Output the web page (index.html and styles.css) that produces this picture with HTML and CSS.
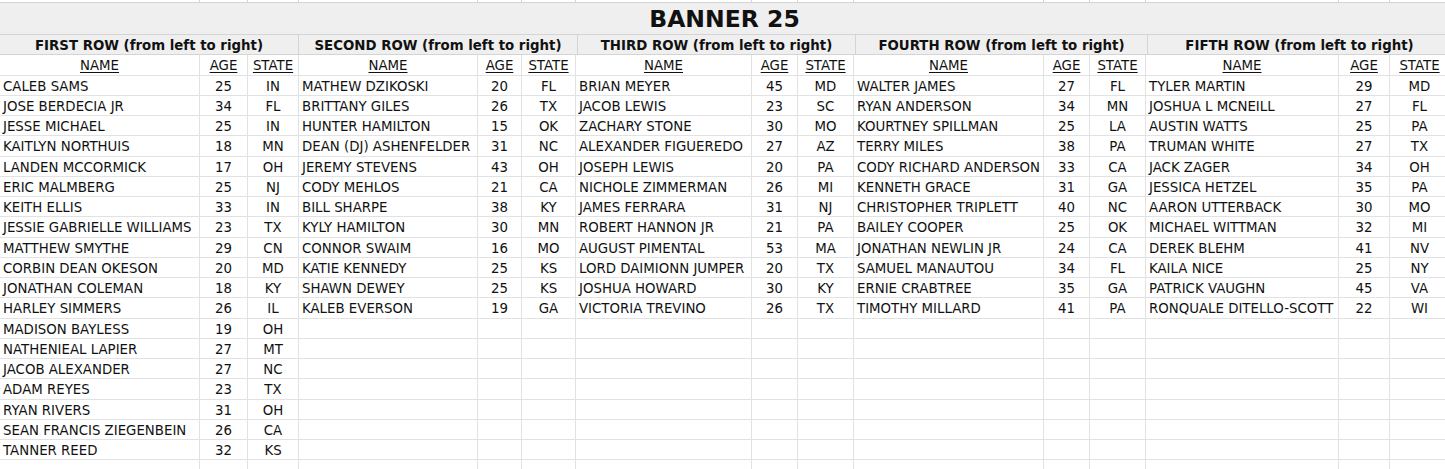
FILE: index.html
```html
<!DOCTYPE html>
<html>
<head>
<meta charset="utf-8">
<title>Banner 25</title>
<link rel="stylesheet" href="styles.css">
</head>
<body>
<div class="sheet">
  <div class="row top">
    <div></div><div></div><div></div><div></div><div></div><div></div><div></div><div></div><div></div><div></div><div></div><div></div><div></div><div></div><div></div>
  </div>
  <div class="row title"><div class="title-cell">BANNER 25</div></div>
  <div class="row head">
    <div class="group">FIRST ROW (from left to right)</div>
    <div class="group">SECOND ROW (from left to right)</div>
    <div class="group">THIRD ROW (from left to right)</div>
    <div class="group">FOURTH ROW (from left to right)</div>
    <div class="group">FIFTH ROW (from left to right)</div>
  </div>
  <div class="row sub">
    <div class="c"><u>NAME</u></div><div class="c"><u>AGE</u></div><div class="c"><u>STATE</u></div>
    <div class="c"><u>NAME</u></div><div class="c"><u>AGE</u></div><div class="c"><u>STATE</u></div>
    <div class="c"><u>NAME</u></div><div class="c"><u>AGE</u></div><div class="c"><u>STATE</u></div>
    <div class="c"><u>NAME</u></div><div class="c"><u>AGE</u></div><div class="c"><u>STATE</u></div>
    <div class="c"><u>NAME</u></div><div class="c"><u>AGE</u></div><div class="c"><u>STATE</u></div>
  </div>
  <div class="row">
    <div class="n">CALEB SAMS</div><div class="c">25</div><div class="c">IN</div>
    <div class="n">MATHEW DZIKOSKI</div><div class="c">20</div><div class="c">FL</div>
    <div class="n">BRIAN MEYER</div><div class="c">45</div><div class="c">MD</div>
    <div class="n">WALTER JAMES</div><div class="c">27</div><div class="c">FL</div>
    <div class="n">TYLER MARTIN</div><div class="c">29</div><div class="c">MD</div>
  </div>
  <div class="row">
    <div class="n">JOSE BERDECIA JR</div><div class="c">34</div><div class="c">FL</div>
    <div class="n">BRITTANY GILES</div><div class="c">26</div><div class="c">TX</div>
    <div class="n">JACOB LEWIS</div><div class="c">23</div><div class="c">SC</div>
    <div class="n">RYAN ANDERSON</div><div class="c">34</div><div class="c">MN</div>
    <div class="n">JOSHUA L MCNEILL</div><div class="c">27</div><div class="c">FL</div>
  </div>
  <div class="row">
    <div class="n">JESSE MICHAEL</div><div class="c">25</div><div class="c">IN</div>
    <div class="n">HUNTER HAMILTON</div><div class="c">15</div><div class="c">OK</div>
    <div class="n">ZACHARY STONE</div><div class="c">30</div><div class="c">MO</div>
    <div class="n">KOURTNEY SPILLMAN</div><div class="c">25</div><div class="c">LA</div>
    <div class="n">AUSTIN WATTS</div><div class="c">25</div><div class="c">PA</div>
  </div>
  <div class="row">
    <div class="n">KAITLYN NORTHUIS</div><div class="c">18</div><div class="c">MN</div>
    <div class="n">DEAN (DJ) ASHENFELDER</div><div class="c">31</div><div class="c">NC</div>
    <div class="n">ALEXANDER FIGUEREDO</div><div class="c">27</div><div class="c">AZ</div>
    <div class="n">TERRY MILES</div><div class="c">38</div><div class="c">PA</div>
    <div class="n">TRUMAN WHITE</div><div class="c">27</div><div class="c">TX</div>
  </div>
  <div class="row">
    <div class="n">LANDEN MCCORMICK</div><div class="c">17</div><div class="c">OH</div>
    <div class="n">JEREMY STEVENS</div><div class="c">43</div><div class="c">OH</div>
    <div class="n">JOSEPH LEWIS</div><div class="c">20</div><div class="c">PA</div>
    <div class="n">CODY RICHARD ANDERSON</div><div class="c">33</div><div class="c">CA</div>
    <div class="n">JACK ZAGER</div><div class="c">34</div><div class="c">OH</div>
  </div>
  <div class="row">
    <div class="n">ERIC MALMBERG</div><div class="c">25</div><div class="c">NJ</div>
    <div class="n">CODY MEHLOS</div><div class="c">21</div><div class="c">CA</div>
    <div class="n">NICHOLE ZIMMERMAN</div><div class="c">26</div><div class="c">MI</div>
    <div class="n">KENNETH GRACE</div><div class="c">31</div><div class="c">GA</div>
    <div class="n">JESSICA HETZEL</div><div class="c">35</div><div class="c">PA</div>
  </div>
  <div class="row">
    <div class="n">KEITH ELLIS</div><div class="c">33</div><div class="c">IN</div>
    <div class="n">BILL SHARPE</div><div class="c">38</div><div class="c">KY</div>
    <div class="n">JAMES FERRARA</div><div class="c">31</div><div class="c">NJ</div>
    <div class="n">CHRISTOPHER TRIPLETT</div><div class="c">40</div><div class="c">NC</div>
    <div class="n">AARON UTTERBACK</div><div class="c">30</div><div class="c">MO</div>
  </div>
  <div class="row">
    <div class="n">JESSIE GABRIELLE WILLIAMS</div><div class="c">23</div><div class="c">TX</div>
    <div class="n">KYLY HAMILTON</div><div class="c">30</div><div class="c">MN</div>
    <div class="n">ROBERT HANNON JR</div><div class="c">21</div><div class="c">PA</div>
    <div class="n">BAILEY COOPER</div><div class="c">25</div><div class="c">OK</div>
    <div class="n">MICHAEL WITTMAN</div><div class="c">32</div><div class="c">MI</div>
  </div>
  <div class="row">
    <div class="n">MATTHEW SMYTHE</div><div class="c">29</div><div class="c">CN</div>
    <div class="n">CONNOR SWAIM</div><div class="c">16</div><div class="c">MO</div>
    <div class="n">AUGUST PIMENTAL</div><div class="c">53</div><div class="c">MA</div>
    <div class="n">JONATHAN NEWLIN JR</div><div class="c">24</div><div class="c">CA</div>
    <div class="n">DEREK BLEHM</div><div class="c">41</div><div class="c">NV</div>
  </div>
  <div class="row">
    <div class="n">CORBIN DEAN OKESON</div><div class="c">20</div><div class="c">MD</div>
    <div class="n">KATIE KENNEDY</div><div class="c">25</div><div class="c">KS</div>
    <div class="n">LORD DAIMIONN JUMPER</div><div class="c">20</div><div class="c">TX</div>
    <div class="n">SAMUEL MANAUTOU</div><div class="c">34</div><div class="c">FL</div>
    <div class="n">KAILA NICE</div><div class="c">25</div><div class="c">NY</div>
  </div>
  <div class="row">
    <div class="n">JONATHAN COLEMAN</div><div class="c">18</div><div class="c">KY</div>
    <div class="n">SHAWN DEWEY</div><div class="c">25</div><div class="c">KS</div>
    <div class="n">JOSHUA HOWARD</div><div class="c">30</div><div class="c">KY</div>
    <div class="n">ERNIE CRABTREE</div><div class="c">35</div><div class="c">GA</div>
    <div class="n">PATRICK VAUGHN</div><div class="c">45</div><div class="c">VA</div>
  </div>
  <div class="row">
    <div class="n">HARLEY SIMMERS</div><div class="c">26</div><div class="c">IL</div>
    <div class="n">KALEB EVERSON</div><div class="c">19</div><div class="c">GA</div>
    <div class="n">VICTORIA TREVINO</div><div class="c">26</div><div class="c">TX</div>
    <div class="n">TIMOTHY MILLARD</div><div class="c">41</div><div class="c">PA</div>
    <div class="n">RONQUALE DITELLO-SCOTT</div><div class="c">22</div><div class="c">WI</div>
  </div>
  <div class="row">
    <div class="n">MADISON BAYLESS</div><div class="c">19</div><div class="c">OH</div>
    <div class="n"></div><div class="c"></div><div class="c"></div>
    <div class="n"></div><div class="c"></div><div class="c"></div>
    <div class="n"></div><div class="c"></div><div class="c"></div>
    <div class="n"></div><div class="c"></div><div class="c"></div>
  </div>
  <div class="row">
    <div class="n">NATHENIEAL LAPIER</div><div class="c">27</div><div class="c">MT</div>
    <div class="n"></div><div class="c"></div><div class="c"></div>
    <div class="n"></div><div class="c"></div><div class="c"></div>
    <div class="n"></div><div class="c"></div><div class="c"></div>
    <div class="n"></div><div class="c"></div><div class="c"></div>
  </div>
  <div class="row">
    <div class="n">JACOB ALEXANDER</div><div class="c">27</div><div class="c">NC</div>
    <div class="n"></div><div class="c"></div><div class="c"></div>
    <div class="n"></div><div class="c"></div><div class="c"></div>
    <div class="n"></div><div class="c"></div><div class="c"></div>
    <div class="n"></div><div class="c"></div><div class="c"></div>
  </div>
  <div class="row">
    <div class="n">ADAM REYES</div><div class="c">23</div><div class="c">TX</div>
    <div class="n"></div><div class="c"></div><div class="c"></div>
    <div class="n"></div><div class="c"></div><div class="c"></div>
    <div class="n"></div><div class="c"></div><div class="c"></div>
    <div class="n"></div><div class="c"></div><div class="c"></div>
  </div>
  <div class="row">
    <div class="n">RYAN RIVERS</div><div class="c">31</div><div class="c">OH</div>
    <div class="n"></div><div class="c"></div><div class="c"></div>
    <div class="n"></div><div class="c"></div><div class="c"></div>
    <div class="n"></div><div class="c"></div><div class="c"></div>
    <div class="n"></div><div class="c"></div><div class="c"></div>
  </div>
  <div class="row">
    <div class="n">SEAN FRANCIS ZIEGENBEIN</div><div class="c">26</div><div class="c">CA</div>
    <div class="n"></div><div class="c"></div><div class="c"></div>
    <div class="n"></div><div class="c"></div><div class="c"></div>
    <div class="n"></div><div class="c"></div><div class="c"></div>
    <div class="n"></div><div class="c"></div><div class="c"></div>
  </div>
  <div class="row">
    <div class="n">TANNER REED</div><div class="c">32</div><div class="c">KS</div>
    <div class="n"></div><div class="c"></div><div class="c"></div>
    <div class="n"></div><div class="c"></div><div class="c"></div>
    <div class="n"></div><div class="c"></div><div class="c"></div>
    <div class="n"></div><div class="c"></div><div class="c"></div>
  </div>
  <div class="row">
    <div class="n"></div><div class="c"></div><div class="c"></div>
    <div class="n"></div><div class="c"></div><div class="c"></div>
    <div class="n"></div><div class="c"></div><div class="c"></div>
    <div class="n"></div><div class="c"></div><div class="c"></div>
    <div class="n"></div><div class="c"></div><div class="c"></div>
  </div>
</div>
</body>
</html>
```

FILE: styles.css
```css
html, body {
  margin: 0;
  padding: 0;
  background: #ffffff;
  overflow: hidden;
}

body {
  font-family: "DejaVu Sans", sans-serif;
  font-size: 13.33px;
  color: #111111;
}

.sheet {
  width: 1460px;
}

.row {
  display: grid;
  grid-template-columns: 200px 48px 51px 179px 44px 54px 176px 46px 56px 190px 46px 56px 193px 51px 60px;
  height: 20.25px;
}

.row > div {
  box-sizing: border-box;
  border-right: 1px solid #e2e2e2;
  border-bottom: 1px solid #e2e2e2;
  white-space: nowrap;
  overflow: hidden;
  display: flex;
  align-items: center;
  padding-top: 2px;
}

.n {
  padding-left: 3px;
}

.c {
  justify-content: center;
}

.row.top {
  height: 3px;
}

.row.top > div {
  border-color: #d4d4d4;
  padding-top: 0;
}

.row.title {
  height: 32px;
}

.row.title > .title-cell {
  grid-column: 1 / -1;
  justify-content: center;
  background: #efefef;
  font-weight: bold;
  font-size: 23.5px;
  border-color: #d4d4d4;
  padding-top: 0;
}

.row.head {
  grid-template-columns: 299px 279px 278px 292px 304px;
}

.row.head > .group {
  justify-content: center;
  background: #efefef;
  font-weight: bold;
  border-color: #d4d4d4;
}

u {
  text-decoration-thickness: 1px;
  text-underline-offset: 2px;
}
```
